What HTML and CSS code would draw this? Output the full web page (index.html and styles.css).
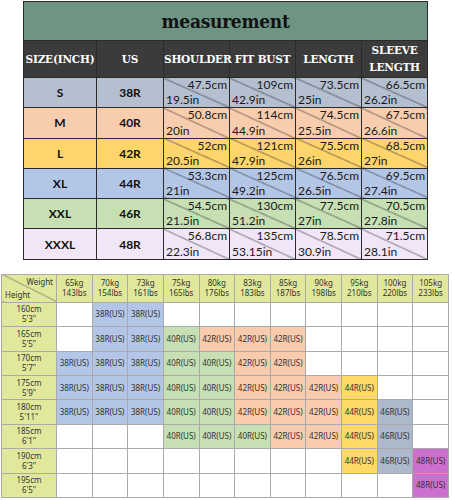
FILE: index.html
```html
<!DOCTYPE html>
<html lang="en">
<head>
<meta charset="UTF-8">
<title>Size chart</title>
<link rel="stylesheet" href="styles.css">
</head>
<body>
<table class="measure">
  <colgroup>
    <col class="c-size"><col class="c-us"><col class="c-m"><col class="c-m"><col class="c-m"><col class="c-m">
  </colgroup>
  <tr class="title-row"><td colspan="6">measurement</td></tr>
  <tr class="head-row">
    <th>SIZE(INCH)</th><th>US</th><th>SHOULDER</th><th>FIT BUST</th><th>LENGTH</th><th>SLEEVE<br>LENGTH</th>
  </tr>
  <tr class="r-s">
    <td class="sz">S</td><td class="sz">38R</td>
    <td class="diag"><div><span class="cm">47.5cm</span><span>19.5in</span></div></td>
    <td class="diag"><div><span class="cm">109cm</span><span>42.9in</span></div></td>
    <td class="diag"><div><span class="cm">73.5cm</span><span>25in</span></div></td>
    <td class="diag"><div><span class="cm">66.5cm</span><span>26.2in</span></div></td>
  </tr>
  <tr class="r-m">
    <td class="sz">M</td><td class="sz">40R</td>
    <td class="diag"><div><span class="cm">50.8cm</span><span>20in</span></div></td>
    <td class="diag"><div><span class="cm">114cm</span><span>44.9in</span></div></td>
    <td class="diag"><div><span class="cm">74.5cm</span><span>25.5in</span></div></td>
    <td class="diag"><div><span class="cm">67.5cm</span><span>26.6in</span></div></td>
  </tr>
  <tr class="r-l">
    <td class="sz">L</td><td class="sz">42R</td>
    <td class="diag"><div><span class="cm">52cm</span><span>20.5in</span></div></td>
    <td class="diag"><div><span class="cm">121cm</span><span>47.9in</span></div></td>
    <td class="diag"><div><span class="cm">75.5cm</span><span>26in</span></div></td>
    <td class="diag"><div><span class="cm">68.5cm</span><span>27in</span></div></td>
  </tr>
  <tr class="r-xl">
    <td class="sz">XL</td><td class="sz">44R</td>
    <td class="diag"><div><span class="cm">53.3cm</span><span>21in</span></div></td>
    <td class="diag"><div><span class="cm">125cm</span><span>49.2in</span></div></td>
    <td class="diag"><div><span class="cm">76.5cm</span><span>26.5in</span></div></td>
    <td class="diag"><div><span class="cm">69.5cm</span><span>27.4in</span></div></td>
  </tr>
  <tr class="r-xxl">
    <td class="sz">XXL</td><td class="sz">46R</td>
    <td class="diag"><div><span class="cm">54.5cm</span><span>21.5in</span></div></td>
    <td class="diag"><div><span class="cm">130cm</span><span>51.2in</span></div></td>
    <td class="diag"><div><span class="cm">77.5cm</span><span>27in</span></div></td>
    <td class="diag"><div><span class="cm">70.5cm</span><span>27.8in</span></div></td>
  </tr>
  <tr class="r-xxxl">
    <td class="sz">XXXL</td><td class="sz">48R</td>
    <td class="diag"><div><span class="cm">56.8cm</span><span>22.3in</span></div></td>
    <td class="diag"><div><span class="cm">135cm</span><span>53.15in</span></div></td>
    <td class="diag"><div><span class="cm">78.5cm</span><span>30.9in</span></div></td>
    <td class="diag"><div><span class="cm">71.5cm</span><span>28.1in</span></div></td>
  </tr>
</table>

<table class="fit">
  <colgroup>
    <col class="c-h"><col span="11" class="c-w">
  </colgroup>
  <tr class="fit-head">
    <td class="corner"><div><span class="cm">Weight</span><span>Height</span></div></td>
    <td>65kg<br>143lbs</td><td>70kg<br>154lbs</td><td>73kg<br>161lbs</td><td>75kg<br>165lbs</td>
    <td>80kg<br>176lbs</td><td>83kg<br>183lbs</td><td>85kg<br>187lbs</td><td>90kg<br>198lbs</td>
    <td>95kg<br>210lbs</td><td>100kg<br>220lbs</td><td>105kg<br>233lbs</td>
  </tr>
  <tr>
    <th>160cm<br>5'3"</th>
    <td></td><td class="b">38R(US)</td><td class="b">38R(US)</td><td></td><td></td><td></td><td></td><td></td><td></td><td></td><td></td>
  </tr>
  <tr>
    <th>165cm<br>5'5"</th>
    <td></td><td class="b">38R(US)</td><td class="b">38R(US)</td><td class="g">40R(US)</td><td class="o">42R(US)</td><td class="o">42R(US)</td><td class="o">42R(US)</td><td></td><td></td><td></td><td></td>
  </tr>
  <tr>
    <th>170cm<br>5'7"</th>
    <td class="b">38R(US)</td><td class="b">38R(US)</td><td class="b">38R(US)</td><td class="g">40R(US)</td><td class="g">40R(US)</td><td class="o">42R(US)</td><td class="o">42R(US)</td><td></td><td></td><td></td><td></td>
  </tr>
  <tr>
    <th>175cm<br>5'9"</th>
    <td class="b">38R(US)</td><td class="b">38R(US)</td><td class="b">38R(US)</td><td class="g">40R(US)</td><td class="g">40R(US)</td><td class="o">42R(US)</td><td class="o">42R(US)</td><td class="o">42R(US)</td><td class="y">44R(US)</td><td></td><td></td>
  </tr>
  <tr>
    <th>180cm<br>5'11"</th>
    <td class="b">38R(US)</td><td class="b">38R(US)</td><td class="b">38R(US)</td><td class="g">40R(US)</td><td class="g">40R(US)</td><td class="o">42R(US)</td><td class="o">42R(US)</td><td class="o">42R(US)</td><td class="y">44R(US)</td><td class="s">46R(US)</td><td></td>
  </tr>
  <tr>
    <th>185cm<br>6'1"</th>
    <td></td><td></td><td></td><td class="g">40R(US)</td><td class="g">40R(US)</td><td class="g">40R(US)</td><td class="o">42R(US)</td><td class="o">42R(US)</td><td class="y">44R(US)</td><td class="s">46R(US)</td><td></td>
  </tr>
  <tr>
    <th>190cm<br>6'3"</th>
    <td></td><td></td><td></td><td></td><td></td><td></td><td></td><td></td><td class="y">44R(US)</td><td class="s">46R(US)</td><td class="p">48R(US)</td>
  </tr>
  <tr>
    <th>195cm<br>6'5"</th>
    <td></td><td></td><td></td><td></td><td></td><td></td><td></td><td></td><td></td><td></td><td class="p">48R(US)</td>
  </tr>
</table>
</body>
</html>
```

FILE: styles.css
```css
body { margin: 0; background: #fff; font-family: 'Lato', 'Liberation Sans', sans-serif; }

/* top chart */
.measure {
  border-collapse: collapse;
  margin: 1px 0 0 23px;
  width: 405px;
  table-layout: fixed;
  border: 1px solid #444;
}
.measure .c-size { width: 73px; }
.measure .c-us { width: 67px; }
.measure .c-m { width: 66px; }
.measure td, .measure th { border: 1px solid #2b2b2b; padding: 0; text-align: center; }
.title-row td {
  background: #6e9484; height: 38px;
  font-family: 'DejaVu Serif Condensed', 'DejaVu Serif', serif; font-stretch: condensed;
  font-weight: bold; font-size: 19px; letter-spacing: -0.3px;
  color: #111;
}
.head-row th {
  background: #3b3b3b; color: #fff; height: 36px;
  font-family: 'DejaVu Serif', serif; font-weight: bold; font-size: 10.5px; line-height: 17px;
  letter-spacing: -0.2px;
}
.r-s { background: #b4bfcf; }
.r-m { background: #f8cdad; }
.r-l { background: #fdd56a; }
.r-xl { background: #b4c6e6; }
.r-xxl { background: #c6e0b4; }
.r-xxxl { background: #f0e6f8; }
.sz { font-weight: bold; font-size: 12px; color: #111; }
.diag {
  background: linear-gradient(to top right, transparent calc(50% - 0.7px), rgba(30,30,40,0.75) 50%, transparent calc(50% + 0.7px));
}
.diag div {
  height: 29.3px; display: flex; flex-direction: column; justify-content: space-between;
  font-size: 12px; line-height: 14px; color: #1a1a1a; text-align: left; padding: 0 2px;
}
.diag .cm { text-align: right; }

/* bottom chart */
.fit {
  border-collapse: collapse;
  margin: 14px 0 0 1px;
  width: 448px;
  table-layout: fixed;
  border: 1px solid #555;
  font-family: 'Noto Sans', sans-serif; font-size: 8px; color: #333;
}
.fit .c-h { width: 55px; }
.fit td, .fit th { border: 1px solid #aaa; padding: 0; text-align: center; font-weight: normal; line-height: 10px; }
.fit tr { height: 24.4px; }
.fit tr.fit-head { height: 28px; }
.fit-head td, .fit th { background: #e2e89b; }
.corner {
  background: linear-gradient(to top right, #e2e89b calc(50% - 0.6px), #555 50%, #e2e89b calc(50% + 0.6px)) !important;
}
.corner div { height: 27px; display: flex; flex-direction: column; justify-content: space-between; padding: 2px 3px; box-sizing: border-box; text-align: left; }
.corner .cm { text-align: right; }
.fit .b { background: #b4c6e7; }
.fit .g { background: #c6e0b4; }
.fit .o { background: #f8cbad; }
.fit .y { background: #ffd966; }
.fit .s { background: #acb9ca; }
.fit .p { background: #cc70d0; }
```
